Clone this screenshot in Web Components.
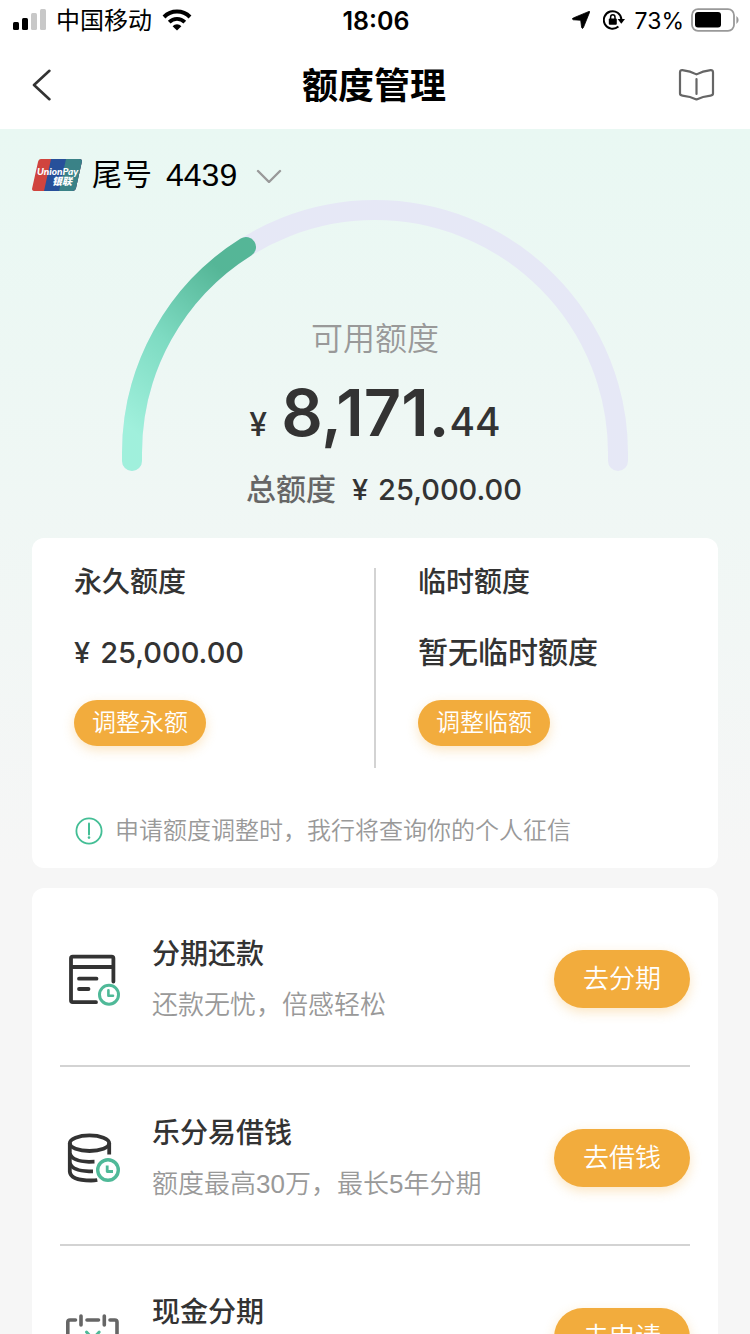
<!DOCTYPE html>
<html lang="zh-CN">
<head>
<meta charset="utf-8">
<meta name="viewport" content="width=device-width, initial-scale=1">
<title>额度管理</title>
<style>
  html, body { margin: 0; height: 100%; }
  body {
    font-family: "Liberation Sans", "Noto Sans CJK SC", sans-serif;
    color: #333;
    background: #f6f6f6;
    --num: "Inter", "Noto Sans CJK SC", sans-serif;
    --thin: 350;
    --orange: #f2ac3d;
    --muted: #999;
  }
</style>
</head>
<body>
<quota-app>
  <status-bar slot="top" carrier="中国移动" time="18:06" battery="73%"></status-bar>
  <nav-bar slot="top">额度管理</nav-bar>

  <card-picker tail="4439"></card-picker>
  <quota-gauge>
    <span slot="label">可用额度</span>
    <span slot="whole">8,171.</span>
    <span slot="cents">44</span>
    <span slot="total-label">总额度</span>
    <span slot="total">25,000.00</span>
  </quota-gauge>

  <quota-card>
    <quota-item>
      <span slot="title">永久额度</span>
      <money-text>25,000.00</money-text>
      <pill-button slot="action" size="small">调整永额</pill-button>
    </quota-item>
    <quota-item>
      <span slot="title">临时额度</span>
      暂无临时额度
      <pill-button slot="action" size="small">调整临额</pill-button>
    </quota-item>
    <span slot="notice">申请额度调整时，我行将查询你的个人征信</span>
  </quota-card>

  <service-list>
    <service-row icon="bill">
      <span slot="title">分期还款</span>
      还款无忧，倍感轻松
      <pill-button slot="action">去分期</pill-button>
    </service-row>
    <service-row icon="coins">
      <span slot="title">乐分易借钱</span>
      额度最高30万，最长5年分期
      <pill-button slot="action">去借钱</pill-button>
    </service-row>
    <service-row icon="calendar">
      <span slot="title">现金分期</span>
      <pill-button slot="action">去申请</pill-button>
    </service-row>
  </service-list>
</quota-app>

<script>
  const define = (name, render) => customElements.define(name, class extends HTMLElement {
    constructor() {
      super();
      this.attachShadow({ mode: 'open' });
    }
    connectedCallback() {
      this.shadowRoot.innerHTML = render(this);
    }
  });

  define('quota-app', () => `
    <style>
      :host { display: flex; flex-direction: column; height: 100vh; overflow: hidden; }
      header { flex: none; background: #fff; }
      main { flex: 1; min-height: 0; overflow-y: auto; scrollbar-width: none; }
      .page {
        box-sizing: border-box;
        padding: 29px 32px 32px;
        background: linear-gradient(#e9f8f3, #f6f6f6 740px);
      }
    </style>
    <header><slot name="top"></slot></header>
    <main><div class="page"><slot></slot></div></main>`);

  define('status-bar', el => `
    <style>
      :host {
        display: grid; grid-template-columns: 1fr auto 1fr; align-items: center;
        height: 40px; padding: 0 11px 0 13px; color: #000;
        font: 24px/38px var(--num);
      }
      .side { display: flex; align-items: center; gap: 10px; }
      .end { justify-content: flex-end; }
      span { padding-top: 2px; }
      .time { font-size: 25px; font-weight: 600; }
      .level { display: flex; align-items: center; gap: 6px; font-size: 23px; }
      .arrow { margin-right: 3px; }
      svg { display: block; flex: none; }
    </style>
    <div class="side">
      <svg width="33" height="22" viewBox="0 0 33 22" aria-hidden="true">
        <rect x="0" y="13" width="6" height="8" rx="1.5"/>
        <rect x="9" y="9" width="6" height="12" rx="1.5"/>
        <rect x="18" y="4" width="6" height="17" rx="1.5" fill="#c8c8c8"/>
        <rect x="27" y="0" width="6" height="21" rx="1.5" fill="#c8c8c8"/>
      </svg>
      <span>${el.getAttribute('carrier')}</span>
      <svg width="30" height="22" viewBox="0 0 30 22" aria-hidden="true">
        <path d="M2 8 A18.4 18.4 0 0 1 28 8" fill="none" stroke="#000" stroke-width="4"/>
        <path d="M7.2 13.2 A11 11 0 0 1 22.8 13.2" fill="none" stroke="#000" stroke-width="3.8"/>
        <path d="M15 21.6 L10.6 17.2 A6.2 6.2 0 0 1 19.4 17.2 Z"/>
      </svg>
    </div>
    <span class="time">${el.getAttribute('time')}</span>
    <div class="side end">
      <svg class="arrow" width="18" height="18" viewBox="0 0 18 18" aria-hidden="true">
        <path d="M17 .4 Q18 .2 17.6 1.200 L11.400 16.600 Q10.400 18.400 9.600 16.400 L8.800 10 Q8.700 9.300 8 9.200 L1.400 8.800 Q-.6 8 1.200 7 Z" stroke="#000" stroke-width=".8"/>
      </svg>
      <svg width="22" height="20" viewBox="0 0 22 20" aria-hidden="true">
        <path d="M15.4 16.6 A8.8 8.8 0 1 1 18.4 9.4" fill="none" stroke="#000" stroke-width="2"/>
        <path d="M14.6 9 H22 L18.3 13.8 Z"/>
        <rect x="5.8" y="8.6" width="8" height="6.2" rx="1"/>
        <path d="M7.6 9 V7.2 A2.2 2.4 0 0 1 12 7.2 V9" fill="none" stroke="#000" stroke-width="1.5"/>
      </svg>
      <div class="level">
        <span>${el.getAttribute('battery')}</span>
        <svg width="49" height="24" viewBox="0 0 49 24" aria-hidden="true">
          <rect x="2" y="1.2" width="42" height="21.6" rx="6" fill="none" stroke="#999" stroke-width="1.8"/>
          <rect x="5" y="4" width="26" height="15.500" rx="3"/>
          <path d="M46.400 8 Q48.6 9.4 48.6 12 Q48.6 14.6 46.400 16 Z" fill="#999"/>
        </svg>
      </div>
    </div>`);

  define('nav-bar', () => `
    <style>
      :host {
        display: grid; grid-template-columns: 1fr auto 1fr; align-items: center;
        height: 89px; padding: 0 34px 0 32px;
      }
      h1 { margin: 0; padding-top: 4px; font-size: 36px; line-height: 48px; font-weight: 600; color: #000; }
      button { display: block; padding: 0; border: 0; background: none; }
      button:last-child { justify-self: end; }
      svg { display: block; fill: none; stroke-linecap: round; stroke-linejoin: round; }
    </style>
    <button aria-label="返回">
      <svg width="20" height="32" viewBox="0 0 20 32" stroke="#333" stroke-width="2.6"><path d="M17.4 1.8 L2 16 L17.4 30.2"/></svg>
    </button>
    <h1><slot></slot></h1>
    <button aria-label="说明">
      <svg width="40" height="32" viewBox="0 0 40 32" stroke="#666" stroke-width="2.2">
        <path d="M20.5 5.4 Q14.4 2.200 6.4 1.200 Q4 1 4 3.400 V24.6 Q4 26.4 6.4 26.6 Q14.4 27.400 20.5 30.4 Q26.6 27.400 34.6 26.6 Q37 26.4 37 24.6 V3.400 Q37 1 34.6 1.200 Q26.6 2.200 20.5 5.4 Z"/>
        <path d="M20.5 10 V25"/>
      </svg>
    </button>`);

  define('card-picker', el => `
    <style>
      :host { display: flex; align-items: center; height: 34px; color: #000; }
      .logo { display: block; margin-right: 10px; }
      label { margin-right: 14px; font-size: 30px; line-height: 34px; }
      .field { display: flex; align-items: center; gap: 18px; }
      select {
        appearance: none; border: 0; padding: 0; margin: 0; background: none;
        font: inherit; font-size: 32px; line-height: 34px; color: inherit;
      }
      .chevron { display: block; pointer-events: none; }
    </style>
    <svg class="logo" width="50" height="32" viewBox="0 0 50 32" aria-label="银联">
      <defs><clipPath id="c"><path d="M9 0 H47 Q50.600 0 49.800 3 L44 29 Q43.300 32 40 32 H3 Q-.600 32 .200 29 L6 3 Q6.700 0 9 0 Z"/></clipPath></defs>
      <g clip-path="url(#c)">
        <rect width="50" height="32" fill="#d0443e"/>
        <path d="M19 0 H50 V32 H12 Z" fill="#27509a"/>
        <path d="M34 0 H50 V32 H27 Z" fill="#3a8287"/>
      </g>
      <text font-size="10" font-style="italic" font-weight="900" fill="#fff" font-family="Lato, Noto Sans CJK SC, sans-serif"><tspan x="5" y="16">UnionPay</tspan><tspan x="20" y="26">银联</tspan></text>
    </svg>
    <label for="card">尾号</label>
    <div class="field">
      <select id="card"><option>${el.getAttribute('tail')}</option></select>
      <svg class="chevron" width="26" height="16" viewBox="0 0 26 16" fill="none" stroke="#999" stroke-width="2.4" stroke-linecap="round" stroke-linejoin="round" aria-hidden="true"><path d="M2 4 L13 15 L24 4"/></svg>
    </div>`);

  define('quota-gauge', () => `
    <style>
      :host { display: grid; justify-items: center; margin: 8px 0 32px; }
      svg, .text { grid-area: 1 / 1; }
      svg { display: block; width: 508px; max-width: 100%; }
      .text { display: flex; flex-direction: column; align-items: center; padding-top: 115px; }
      .label { font-size: 32px; line-height: 48px; font-weight: var(--thin); color: var(--muted); }
      .amount {
        display: flex; align-items: baseline; margin-top: 10px;
        font-family: var(--num); font-weight: 500; line-height: 40px;
      }
      .sign { font-size: 32px; margin-right: 14px; }
      .whole { font-size: 65px; line-height: 80px; font-weight: 600; }
      .cents { font-size: 39px; }
      .total {
        display: flex; align-items: center; gap: 16px; margin-top: 21px; padding-left: 18px;
        font-size: 30px; line-height: 32px; font-weight: 500;
      }
      .total-label { color: #666; }
    </style>
    <svg viewBox="0 0 508 272" fill="none" stroke-width="20" stroke-linecap="round" aria-hidden="true">
      <defs>
        <linearGradient id="g" gradientUnits="userSpaceOnUse" x1="11" y1="230" x2="125" y2="90">
          <stop offset="0" stop-color="#a0f0dc"/>
          <stop offset=".5" stop-color="#7edbc2"/>
          <stop offset="1" stop-color="#55b697"/>
        </linearGradient>
      </defs>
      <path d="M11 261 V253 A243 243 0 0 1 497 253 V261" stroke="#e6e8f6"/>
      <path d="M11 261 V253 A243 243 0 0 1 125 47" stroke="url(#g)"/>
    </svg>
    <div class="text">
      <div class="label"><slot name="label"></slot></div>
      <div class="amount">
        <span class="sign">¥</span>
        <span class="whole"><slot name="whole"></slot></span>
        <span class="cents"><slot name="cents"></slot></span>
      </div>
      <div class="total">
        <span class="total-label"><slot name="total-label"></slot></span>
        <money-text><slot name="total"></slot></money-text>
      </div>
    </div>`);

  define('money-text', () => `
    <style>
      :host { display: inline-flex; align-items: baseline; gap: 10px; font-family: var(--num); font-size: 29px; font-weight: 500; }
    </style>
    <span>¥</span><span><slot></slot></span>`);

  define('pill-button', el => `
    <style>
      :host { display: block; }
      button {
        display: block; border: 0; margin: 0; padding: 0;
        width: 136px; height: 58px; border-radius: 29px;
        font: 26px/58px "Liberation Sans", "Noto Sans CJK SC", sans-serif;
        font-weight: var(--thin);
        color: #fff; background: var(--orange);
        box-shadow: 0 4px 12px rgba(242, 172, 61, .3);
      }
      :host([size="small"]) button { width: 132px; height: 46px; font-size: 24px; line-height: 44px; }
    </style>
    <button><slot></slot></button>`);

  define('quota-card', () => `
    <style>
      :host { display: block; padding: 30px 0 20px; border-radius: 12px; background: #fff; }
      .columns { display: grid; grid-template-columns: 1fr 1fr; column-gap: 2px; min-height: 200px; background: linear-gradient(#d3d3d3, #d3d3d3) center / 2px 100% no-repeat; }
      .notice {
        display: flex; align-items: center; gap: 12px; margin: 46px 42px 0;
        font-size: 24px; line-height: 34px; font-weight: var(--thin); color: var(--muted);
      }
      svg { display: block; flex: none; margin-left: 1px; }
    </style>
    <div class="columns"><slot></slot></div>
    <div class="notice">
      <svg width="28" height="28" viewBox="0 0 28 28" aria-hidden="true">
        <circle cx="14" cy="14" r="12.600" fill="none" stroke="#43be95" stroke-width="1.8"/>
        <path d="M14 6.500 V17.500" stroke="#43be95" stroke-width="2" stroke-linecap="round"/>
        <circle cx="14" cy="20.600" r="1.300" fill="#43be95"/>
      </svg>
      <span><slot name="notice"></slot></span>
    </div>`);

  define('quota-item', () => `
    <style>
      :host { display: block; padding-left: 42px; }
      h2 { margin: 0; font-size: 28px; line-height: 30px; font-weight: 500; }
      .value { margin: 38px 0 30px; font-size: 30px; line-height: 34px; font-weight: 500; }
    </style>
    <h2><slot name="title"></slot></h2>
    <div class="value"><slot></slot></div>
    <slot name="action"></slot>`);

  define('service-list', () => `
    <style>
      :host { display: block; margin-top: 20px; padding: 0 28px; border-radius: 12px; background: #fff; }
      ::slotted(:not(:last-child)) { border-bottom: 2px solid #d3d3d3; }
    </style>
    <slot></slot>`);

  const icons = {
    bill: `
      <g stroke="#333" stroke-width="3.800">
        <path d="M53.400 34.500 V11.500 Q53.400 9.700 51.600 9.700 H12.700 Q11 9.700 11 11.500 V53.300 Q11 55.200 12.700 55.200 H36"/>
        <path d="M11 20 H53.400" stroke-linecap="butt"/>
        <path d="M19 31.700 H36.500 M19 42 H28.500"/>
      </g>
      <g stroke="#4fb998"><circle cx="49" cy="47.700" r="9.500" stroke-width="3"/><path d="M48.400 43.300 V48.800 H53" stroke-width="2.600"/></g>`,
    coins: `
      <g stroke="#333" stroke-width="3.800" stroke-linecap="butt">
        <ellipse cx="29.500" cy="17.200" rx="19.700" ry="7.800"/>
        <path d="M9.800 17 V45.500 Q10.500 54.500 31 54.500 Q34.500 54.500 37.300 54"/>
        <path d="M9.800 27.500 Q12.500 35.500 29 35.800 L34.500 35.700"/>
        <path d="M9.800 37 Q12.500 45 29 45.300 L33 45.300"/>
        <path d="M49.200 17 V28.500"/>
      </g>
      <g stroke="#4fb998"><circle cx="48" cy="44" r="10.300" stroke-width="3.400"/><path d="M47.200 39.500 V45.500 H53" stroke-width="2.800" stroke-linecap="butt"/></g>`,
    calendar: `
      <g stroke="#666" stroke-width="3.600">
        <path d="M7.800 56 V17 Q7.800 15 10 15 H15.500 M27 15 H38.500 M50 15 H54.800 Q57 15 57 17 V56 Q57 58 54.800 58 H10 Q7.800 58 7.800 56"/>
        <path d="M21 11 V20 M44.300 11 V20"/>
      </g>
      <path d="M26.500 27 L32.800 34 L39.200 27 M32.800 34 V48 M26 36 H39.600 M26 42 H39.600" stroke="#4fb998" stroke-width="3"/>`
  };

  define('service-row', el => `
    <style>
      :host { display: flex; align-items: center; gap: 28px; padding: 46px 0 42px; }
      svg { display: block; flex: none; }
      .text { flex: 1; min-width: 0; min-height: 89px; }
      h2 { margin: 0 0 11px; font-size: 28px; line-height: 42px; font-weight: 500; }
      p { margin: 0; font-size: 26px; line-height: 36px; font-weight: var(--thin); color: var(--muted); }
    </style>
    <svg width="64" height="64" viewBox="0 0 64 64" fill="none" stroke-linecap="round" stroke-linejoin="round" aria-hidden="true">${icons[el.getAttribute('icon')]}</svg>
    <div class="text">
      <h2><slot name="title"></slot></h2>
      <p><slot></slot></p>
    </div>
    <slot name="action"></slot>`);
</script>
</body>
</html>
